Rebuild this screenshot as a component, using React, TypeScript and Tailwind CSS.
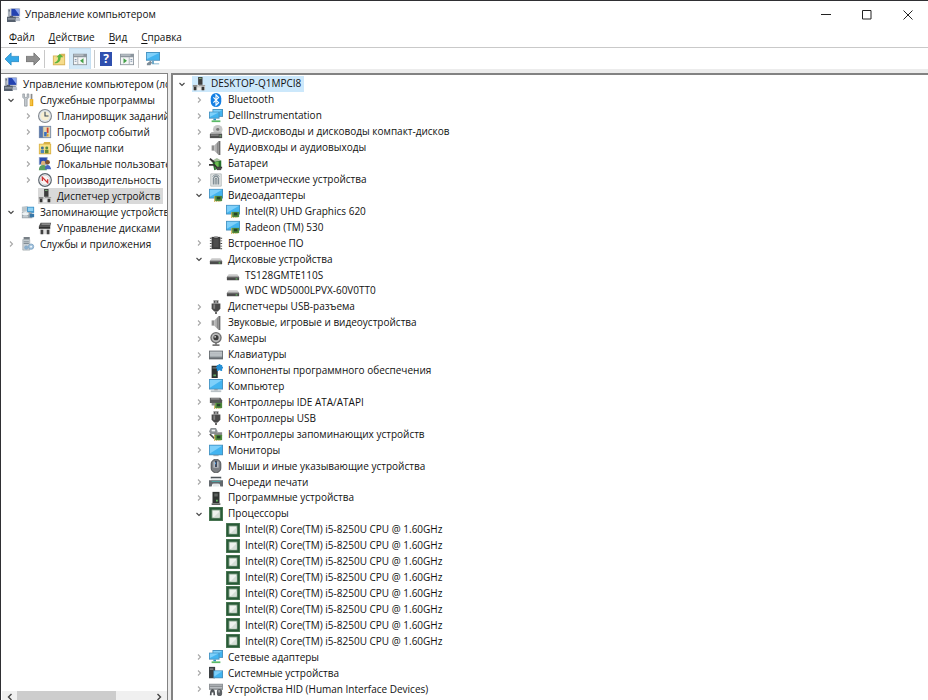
import React from 'react';
import clsx from 'clsx';

interface TreeNode {
  label: string;
  icon: IconName;
  depth: number;
  state?: 'open' | 'closed';
  selected?: boolean;
}

const Monitor = ({ x = 1, y = 2, w = 14, h = 9 }: { x?: number; y?: number; w?: number; h?: number }) => (
  <g>
    <rect x={x} y={y} width={w} height={h} fill="#4a90bd" />
    <rect x={x + 1} y={y + 1} width={w - 2} height={h - 2} fill="#43b4f0" />
    <path d={`M${x + 1} ${y + 1}h${w - 2}L${x + 1} ${y + h - 2}z`} fill="#7fd0fa" />
  </g>
);

const Chip = () => (
  <g>
    <path d="M7 9h8v6H7z" fill="#4f8a3c" />
    <path d="M9 10h4v3H9z" fill="#27442a" />
    <path d="M6 9h1v7H6zM8 15h1v1H8zM10 15h1v1h-1zM12 15h1v1h-1z" fill="#c6a53b" />
  </g>
);

const Plug = () => (
  <g>
    <path d="M5 0h6v4H5z" fill="#a0a0a0" />
    <path d="M6 1h1v2H6zM9 1h1v2H9z" fill="#333" />
    <path d="M3 4h10v6l-3 3H6l-3-3z" fill="#484848" />
    <path d="M5 5h2v5H5z" fill="#808080" />
    <path d="M7 13h2v3H7z" fill="#555" />
  </g>
);

const Speaker = () => (
  <g>
    <path d="M3 5h3v6H3z" fill="#8f8f8f" />
    <path d="M6 5l5-5v16l-5-5z" fill="#b3b3b3" />
    <path d="M11 0h2v16h-2z" fill="#6b6b6b" />
    <path d="M9 3l2-3v16l-2-3z" fill="#8a8a8a" />
  </g>
);

const Drive = () => (
  <g>
    <path d="M3 7h10l2 3H1z" fill="#c9c9c9" />
    <path d="M1 10h14v4H1z" fill="#4b4b4b" />
    <path d="M1 10h14v1H1z" fill="#777" />
    <path d="M11 12h2v1h-2z" fill="#6fe06b" />
  </g>
);

const icons = {
  management: (
    <g>
      <path d="M4 0h11v10H4z" fill="#c8cdd6" />
      <path d="M5 1h9v8H5z" fill="#2342b0" />
      <path d="M9 1h5v7z" fill="#8aa5ee" />
      <path d="M1 1h3v9H1z" fill="#a9b0bb" />
      <path d="M2 2h1v2H2z" fill="#4a5260" />
      <path d="M6 10h7l2 2H6z" fill="#8a93a3" />
      <path d="M0 10h10v6H0z" fill="#56606e" />
      <path d="M3 9h4v1H3z" fill="#333b48" />
      <path d="M1 12h8v1H1z" fill="#bfc5cc" />
      <path d="M10 12h5v3h-5z" fill="#b9c0cc" />
    </g>
  ),
  device: (
    <g>
      <path d="M7 0h5v9H7z" fill="#3d3d3d" />
      <path d="M8 1h3v1H8z" fill="#8cc98c" />
      <path d="M1 9h14v6H1z" fill="#d0d0d0" />
      <path d="M1 9h5v2H1zM8 9h7v1H8z" fill="#8a8a8a" />
      <path d="M2 11h3v4H2zM11 11h3v4h-3z" fill="#353535" />
      <path d="M6 12h4v3H6z" fill="#efefef" />
    </g>
  ),
  tools: (
    <g>
      <path d="M2 1v4l2 2v8h3V7l2-2V1H7v4H4V1z" fill="#c3c9ce" stroke="#747b82" strokeWidth=".6" />
      <path d="M11 1h2v6h-2z" fill="#8b8b8b" />
      <path d="M10 7h4v8h-4z" fill="#e8a818" />
      <path d="M11 8h1v6h-1z" fill="#ffdc72" />
    </g>
  ),
  clock: (
    <g>
      <circle cx="8" cy="8" r="8" fill="#80868c" />
      <circle cx="8" cy="8" r="6.8" fill="#dfe6eb" />
      <circle cx="8" cy="8" r="5.2" fill="#f6eed2" />
      <path d="M8 3v5h4" fill="none" stroke="#345" strokeWidth="1.2" />
    </g>
  ),
  events: (
    <g>
      <path d="M1 1h14v14H1z" fill="#7389ad" />
      <path d="M2 2h3v12H2z" fill="#5677b0" />
      <path d="M6 2h8v12H6z" fill="#e5d8ae" />
      <path d="M10 3h2v6h-2z" fill="#d33b2c" />
      <path d="M7 8h3v5H7z" fill="#3b70c0" />
      <path d="M10 10h2v3h-2z" fill="#dba128" />
    </g>
  ),
  folders: (
    <g>
      <path d="M1 3h5l1-2h7v2h1v12H1z" fill="#d9b146" />
      <path d="M2 4h12v10H2z" fill="#f8e186" />
      <circle cx="5" cy="8" r="1.7" fill="#3e6e9c" />
      <circle cx="10" cy="8" r="1.7" fill="#5a8c3e" />
      <path d="M3 10h4v4H3z" fill="#4c84bf" />
      <path d="M8 10h4v4H8z" fill="#668b35" />
    </g>
  ),
  users: (
    <g>
      <path d="M1 0h10v9H1z" fill="#8fa3cc" />
      <path d="M2 1h8v7H2z" fill="#2d4db0" />
      <circle cx="6" cy="7" r="2.6" fill="#dfb17a" />
      <path d="M1 15q0-6 5-6t4 6z" fill="#5a9f62" />
      <circle cx="11" cy="6" r="2.6" fill="#7e5330" />
      <path d="M8 14q0-5 3-5t4 5z" fill="#4767c0" />
    </g>
  ),
  performance: (
    <g>
      <circle cx="8" cy="8" r="7.2" fill="#fff" stroke="#5c656e" strokeWidth="1.4" />
      <circle cx="8" cy="8" r="5.4" fill="#fbf3f3" stroke="#c0c8ce" strokeWidth=".8" />
      <path d="M5 9V5l6 6V7" fill="none" stroke="#cf3434" strokeWidth="1.5" />
    </g>
  ),
  storage: (
    <g>
      <path d="M1 2l6-1 2 2v4l-7 1-1-1z" fill="#bcc6cb" />
      <path d="M7 2h8v7H7z" fill="#3f93c9" />
      <path d="M8 3h6v4H8z" fill="#8fd1f3" />
      <path d="M1 8h10l2 2v5H1z" fill="#9aa5ac" />
      <ellipse cx="5" cy="10" rx="3.8" ry="2" fill="#edf2f4" />
      <path d="M10 10h5v4h-5z" fill="#3777a8" />
      <path d="M2 13h6v1H2z" fill="#dce3e6" />
    </g>
  ),
  diskManagement: (
    <g>
      <path d="M3 2h12l-1 4H1z" fill="#505050" />
      <path d="M4 3h10v1H4z" fill="#c2c2c2" />
      <path d="M1 6h13v3H1z" fill="#2f2f2f" />
      <path d="M2 9h12v6H2z" fill="#dedede" />
      <path d="M3 10h3v5H3zM10 10h3v5h-3z" fill="#424242" />
    </g>
  ),
  services: (
    <g>
      <path d="M3 0h7v3H3z" fill="#777f86" />
      <path d="M2 3h8v12H2z" fill="#c9d0d5" stroke="#8b959c" strokeWidth=".6" />
      <path d="M3 5h6v1H3zM3 7h6v1H3z" fill="#6b7780" />
      <circle cx="11.5" cy="11" r="3" fill="#a4c4df" stroke="#7fa3c2" />
      <circle cx="11.5" cy="11" r="1" fill="#fff" />
      <circle cx="6" cy="12" r="2" fill="#8ab0d0" stroke="#7fa3c2" strokeWidth=".6" />
    </g>
  ),
  bluetooth: (
    <g>
      <rect x="2" y="0" width="12" height="16" rx="6" fill="#1580e4" />
      <path d="M5 5l6 6-3 3V2l3 3-6 6" fill="none" stroke="#fff" strokeWidth="1.3" />
    </g>
  ),
  network: (
    <g>
      <Monitor x={4} y={0} w={12} h={9} />
      <Monitor x={0} y={3} w={12} h={8} />
      <path d="M5 11h3v2H5z" fill="#2d90c7" />
      <path d="M3 13h10v2H3z" fill="#5cba66" />
    </g>
  ),
  dvd: (
    <g>
      <ellipse cx="10" cy="5" rx="5.5" ry="5" fill="#c6c6c6" />
      <ellipse cx="10" cy="5" rx="1.8" ry="1.5" fill="#777" />
      <path d="M3 8h11l1 2H1z" fill="#b5b5b5" />
      <path d="M1 10h14v5H1z" fill="#505050" />
      <path d="M2 11h9v1H2z" fill="#aaa" />
      <path d="M12 12h2v1h-2z" fill="#89d687" />
    </g>
  ),
  speaker: <Speaker />,
  battery: (
    <g>
      <path d="M2 5l7-4 5 3-7 4z" fill="#a9bfa0" />
      <path d="M4 6l10-2v8l-8 3z" fill="#26712c" />
      <path d="M7 6l4-1v7l-4 1z" fill="#6dbd52" />
      <path d="M1 2l5 4M0 9h6l3 3h6" fill="none" stroke="#343434" strokeWidth="2" />
      <path d="M9 12h5v3H9z" fill="#484848" />
    </g>
  ),
  fingerprint: (
    <g>
      <path d="M2 1h12v14H2z" fill="#e3e6e6" stroke="#b4baba" />
      <path d="M5 13V6q3-5 6 0v7M7 13V7q1-2 2 0v6" fill="none" stroke="#7c8a90" strokeWidth="1.3" />
      <path d="M4 4q4-4 8 0" fill="none" stroke="#7c8a90" />
    </g>
  ),
  display: (
    <g>
      <Monitor x={0} y={1} w={16} h={11} />
      <Chip />
    </g>
  ),
  firmware: (
    <g>
      <path d="M3 1h10v14H3z" fill="#3c3c3c" />
      <path d="M5 3h6v10H5z" fill="#4d4d4d" />
      <path d="M1 2h2v1H1zM1 5h2v1H1zM1 8h2v1H1zM1 11h2v1H1zM1 14h2v1H1zM13 2h2v1h-2zM13 5h2v1h-2zM13 8h2v1h-2zM13 11h2v1h-2zM13 14h2v1h-2z" fill="#444" />
      <path d="M6 0h4v2H6z" fill="#a6a6a6" />
    </g>
  ),
  drive: <Drive />,
  plug: <Plug />,
  camera: (
    <g>
      <circle cx="8" cy="6.5" r="6.5" fill="#6e6e6e" />
      <circle cx="8" cy="6.5" r="5" fill="#bcbcbc" />
      <circle cx="8" cy="6.5" r="3" fill="#3c3c3c" />
      <circle cx="7" cy="5.5" r="1" fill="#ddd" />
      <path d="M7 12h2v2h3v2H4v-2h3z" fill="#777" />
    </g>
  ),
  keyboard: (
    <g>
      <path d="M0 3h16v10H0z" fill="#666b70" />
      <path d="M1 4h14v6H1z" fill="#c3c8cc" />
      <path d="M1 6h14M1 8h14" stroke="#a3a9ae" strokeWidth=".6" />
      <path d="M1 10h14v1H1z" fill="#8b9095" />
    </g>
  ),
  component: (
    <g>
      <path d="M3 2h7v14H3z" fill="#2d3230" />
      <path d="M4 4h4v1H4z" fill="#999" />
      <path d="M5 12h3v2H5z" fill="#65a865" />
      <path d="M9 1h2V0h2v1h2v2h1v2h-1v3h-2V7h-2v1H9V5H8V3h1z" fill="#2790d5" />
    </g>
  ),
  computer: (
    <g>
      <Monitor x={0} y={0} w={16} h={12} />
      <path d="M6 12h4v1H6z" fill="#777" />
      <path d="M2 13h12v2H2z" fill="#b9c1c6" />
    </g>
  ),
  ide: (
    <g>
      <path d="M1 3h12l2 3v3H1z" fill="#555" />
      <path d="M2 4h10v1H2z" fill="#b7b7b7" />
      <Chip />
      <path d="M3 9h4v3H3z" fill="#898989" />
    </g>
  ),
  storageController: (
    <g>
      <path d="M2 1h6l2 4-3 3H2L0 5z" fill="#8d9296" />
      <path d="M3 3h4v2H3z" fill="#eef1f2" />
      <path d="M1 8l5 5" stroke="#4b4b4b" strokeWidth="2" />
      <path d="M6 6h9v4H6z" fill="#8a8a8a" />
      <Chip />
    </g>
  ),
  monitor: (
    <g>
      <Monitor x={0} y={2} w={16} h={12} />
      <path d="M5 14h6v1H5z" fill="#8b9aa3" />
    </g>
  ),
  mouse: (
    <g>
      <rect x="2.5" y=".5" width="11" height="15" rx="5" fill="#7d8084" stroke="#44474a" />
      <path d="M5 3h6v7H5z" fill="#b4b9be" />
      <path d="M7 2h2v7H7z" fill="#303c52" />
      <path d="M7 4h1v2H7z" fill="#55a9ee" />
    </g>
  ),
  printer: (
    <g>
      <path d="M2 2h12v2H2z" fill="#4c5358" />
      <path d="M3 4h10l1 2H2z" fill="#e9eef0" />
      <path d="M0 6h16v7h-3l-1-3H4l-1 3H0z" fill="#62686d" />
      <path d="M3 7h10v1H3z" fill="#48a7a7" />
      <path d="M5 10h6l1 3H4z" fill="#e2e7ea" />
    </g>
  ),
  software: (
    <g>
      <path d="M4 1h8v13H4z" fill="#303432" />
      <path d="M6 3h4v1H6zM6 5h4v1H6z" fill="#8d9390" />
      <path d="M8 10h2v2H8z" fill="#62c163" />
      <path d="M3 14h10v2H3z" fill="#606462" />
    </g>
  ),
  cpu: (
    <g>
      <path d="M0 0h16v16H0z" fill="#4c7856" />
      <path d="M1 1h14v14H1z" fill="#285a37" />
      <path d="M3 3h10v10H3z" fill="#86a58c" />
      <path d="M4 4h8v8H4z" fill="#eef2ee" />
      <path d="M12 5v7H5z" fill="#d5ded7" />
    </g>
  ),
  system: (
    <g>
      <path d="M0 1h7v13H0z" fill="#3a3f43" />
      <path d="M1 3h4v1H1z" fill="#bbb" />
      <Monitor x={5} y={5} w={11} h={9} />
    </g>
  ),
  hid: (
    <g>
      <path d="M0 2h16v7H0z" fill="#8c9094" />
      <path d="M1 3h14v1H1zM1 6h14v1H1z" fill="#c8cccf" />
      <path d="M1 15q0-7 3-7t3 7H5v-3H3v3z" fill="#505458" />
      <rect x="9" y="8" width="6" height="8" rx="3" fill="#5d6165" />
      <path d="M11 9h1v3h-1z" fill="#e0e0e0" />
    </g>
  ),
  back: <path d="M0 8l7-7v4h9v6H7v4z" fill="#35a8e8" stroke="#2385bf" strokeWidth=".8" />,
  forward: <path d="M16 8L9 1v4H0v6h9v4z" fill="#8f8f8f" stroke="#666" strokeWidth=".8" />,
  upFolder: (
    <g>
      <path d="M1 4h8l1-2h5v13H1z" fill="#d8b45a" />
      <path d="M2 5h12v9H2z" fill="#f6dc8c" />
      <path d="M3 12q4-1 4-6H5l4-4 4 4h-3q0 7-7 7z" fill="#5cb53e" />
    </g>
  ),
  panel: (
    <g>
      <path d="M0 2h16v13H0z" fill="#8d969e" />
      <path d="M1 6h14v8H1z" fill="#f4f5f6" />
      <path d="M1 3h11v1H1z" fill="#d9dee3" />
      <path d="M5 6h1v8H5z" fill="#a4acb3" />
      <path d="M12 7v6l-4-3z" fill="#43a047" />
      <path d="M2 8h2v1H2zM2 10h2v1H2z" fill="#8296b0" />
    </g>
  ),
  actionPanel: (
    <g>
      <path d="M0 2h16v13H0z" fill="#8d969e" />
      <path d="M1 6h14v8H1z" fill="#f4f5f6" />
      <path d="M1 3h11v1H1z" fill="#d9dee3" />
      <path d="M10 6h1v8h-1z" fill="#a4acb3" />
      <path d="M4 7v6l4-3z" fill="#43a047" />
      <path d="M12 8h2v1h-2zM12 10h2v1h-2z" fill="#8296b0" />
    </g>
  ),
  scan: (
    <g>
      <Monitor x={0} y={0} w={16} h={10} />
      <path d="M1 13l4-3 2 2-2 3H1z" fill="#7d8c97" />
      <path d="M7 10h2v3h6v1H7z" fill="#5e9fc2" />
    </g>
  ),
};

type IconName = keyof typeof icons;

const Icon = ({ name, className = 'size-3.5' }: { name: IconName; className?: string }) => (
  <svg viewBox="0 0 16 16" className={clsx('shrink-0', className)} aria-hidden="true">
    {icons[name]}
  </svg>
);

const consoleTree: TreeNode[] = [
  { label: 'Управление компьютером (локальным)', icon: 'management', depth: 0 },
  { label: 'Служебные программы', icon: 'tools', depth: 0, state: 'open' },
  { label: 'Планировщик заданий', icon: 'clock', depth: 1, state: 'closed' },
  { label: 'Просмотр событий', icon: 'events', depth: 1, state: 'closed' },
  { label: 'Общие папки', icon: 'folders', depth: 1, state: 'closed' },
  { label: 'Локальные пользователи', icon: 'users', depth: 1, state: 'closed' },
  { label: 'Производительность', icon: 'performance', depth: 1, state: 'closed' },
  { label: 'Диспетчер устройств', icon: 'device', depth: 1, selected: true },
  { label: 'Запоминающие устройства', icon: 'storage', depth: 0, state: 'open' },
  { label: 'Управление дисками', icon: 'diskManagement', depth: 1 },
  { label: 'Службы и приложения', icon: 'services', depth: 0, state: 'closed' },
];

const cores: TreeNode[] = Array.from({ length: 8 }, () => ({
  label: 'Intel(R) Core(TM) i5-8250U CPU @ 1.60GHz',
  icon: 'cpu',
  depth: 2,
}));

const deviceTree: TreeNode[] = [
  { label: 'DESKTOP-Q1MPCI8', icon: 'device', depth: 0, state: 'open', selected: true },
  { label: 'Bluetooth', icon: 'bluetooth', depth: 1, state: 'closed' },
  { label: 'DellInstrumentation', icon: 'network', depth: 1, state: 'closed' },
  { label: 'DVD-дисководы и дисководы компакт-дисков', icon: 'dvd', depth: 1, state: 'closed' },
  { label: 'Аудиовходы и аудиовыходы', icon: 'speaker', depth: 1, state: 'closed' },
  { label: 'Батареи', icon: 'battery', depth: 1, state: 'closed' },
  { label: 'Биометрические устройства', icon: 'fingerprint', depth: 1, state: 'closed' },
  { label: 'Видеоадаптеры', icon: 'display', depth: 1, state: 'open' },
  { label: 'Intel(R) UHD Graphics 620', icon: 'display', depth: 2 },
  { label: 'Radeon (TM) 530', icon: 'display', depth: 2 },
  { label: 'Встроенное ПО', icon: 'firmware', depth: 1, state: 'closed' },
  { label: 'Дисковые устройства', icon: 'drive', depth: 1, state: 'open' },
  { label: 'TS128GMTE110S', icon: 'drive', depth: 2 },
  { label: 'WDC WD5000LPVX-60V0TT0', icon: 'drive', depth: 2 },
  { label: 'Диспетчеры USB-разъема', icon: 'plug', depth: 1, state: 'closed' },
  { label: 'Звуковые, игровые и видеоустройства', icon: 'speaker', depth: 1, state: 'closed' },
  { label: 'Камеры', icon: 'camera', depth: 1, state: 'closed' },
  { label: 'Клавиатуры', icon: 'keyboard', depth: 1, state: 'closed' },
  { label: 'Компоненты программного обеспечения', icon: 'component', depth: 1, state: 'closed' },
  { label: 'Компьютер', icon: 'computer', depth: 1, state: 'closed' },
  { label: 'Контроллеры IDE ATA/ATAPI', icon: 'ide', depth: 1, state: 'closed' },
  { label: 'Контроллеры USB', icon: 'plug', depth: 1, state: 'closed' },
  { label: 'Контроллеры запоминающих устройств', icon: 'storageController', depth: 1, state: 'closed' },
  { label: 'Мониторы', icon: 'monitor', depth: 1, state: 'closed' },
  { label: 'Мыши и иные указывающие устройства', icon: 'mouse', depth: 1, state: 'closed' },
  { label: 'Очереди печати', icon: 'printer', depth: 1, state: 'closed' },
  { label: 'Программные устройства', icon: 'software', depth: 1, state: 'closed' },
  { label: 'Процессоры', icon: 'cpu', depth: 1, state: 'open' },
  ...cores,
  { label: 'Сетевые адаптеры', icon: 'network', depth: 1, state: 'closed' },
  { label: 'Системные устройства', icon: 'system', depth: 1, state: 'closed' },
  { label: 'Устройства HID (Human Interface Devices)', icon: 'hid', depth: 1, state: 'closed' },
];

const indents = ['', 'pl-[17px]', 'pl-[34px]'];

const Expander = ({ state, label }: { state?: 'open' | 'closed'; label: string }) => {
  if (!state) return <span className="mr-[3px] w-3.5 shrink-0" />;
  return (
    <button aria-label={label} className="mr-[3px] flex h-4 w-3.5 shrink-0 items-center justify-center">
      <svg viewBox="0 0 8 8" className="size-2" fill="none" aria-hidden="true">
        {state === 'open' ? (
          <path d="M1.500 3L4 5.500L6.500 3" stroke="#454545" strokeWidth="1.1" />
        ) : (
          <path d="M3 1.500L5.500 4L3 6.500" stroke="#a8a8a8" strokeWidth="1.1" />
        )}
      </svg>
    </button>
  );
};

const Tree = ({ nodes, label, selectedClass }: { nodes: TreeNode[]; label: string; selectedClass: string }) => (
  <ul role="tree" aria-label={label} className="flex min-h-0 min-w-0 flex-1 flex-col overflow-hidden">
    {nodes.map((node, i) => (
      <li
        key={i}
        role="treeitem"
        aria-selected={!!node.selected}
        aria-expanded={node.state ? node.state === 'open' : undefined}
        className={clsx('flex max-h-4 min-h-0 flex-1 items-center whitespace-nowrap', indents[node.depth])}
      >
        {(i > 0 || node.state) && <Expander state={node.state} label={node.label} />}
        <span className={clsx('flex h-4 items-center gap-[5px] pr-[3px]', node.selected && selectedClass)}>
          <Icon name={node.icon} />
          <span>{node.label}</span>
        </span>
      </li>
    ))}
  </ul>
);

const menu = ['Файл', 'Действие', 'Вид', 'Справка'];

const ToolButton = ({ name, label, active }: { name: IconName; label: string; active?: boolean }) => (
  <button
    aria-label={label}
    className={clsx('flex h-5 w-5 items-center justify-center', active && 'bg-[#d3e9f8] outline outline-[#c5e0f3]')}
  >
    <Icon name={name} />
  </button>
);

const Separator = () => <span className="h-[18px] w-px bg-[#c8c8c8]" />;

const App: React.FC = () => {
  return (
    <div className="flex h-screen flex-col overflow-hidden border-t border-l border-[#2f2f33] bg-white font-['Open_Sans','Noto_Sans',sans-serif] text-[10px] text-[#111]">
      <header className="flex h-[27px] shrink-0 items-center justify-between pl-1.5">
        <div className="flex items-center gap-1">
          <Icon name="management" />
          <h1>Управление компьютером</h1>
        </div>
        <div className="flex">
          <button aria-label="Свернуть" className="flex h-6 w-[41px] items-center justify-center">
            <svg viewBox="0 0 10 10" className="size-2.5" stroke="#222" aria-hidden="true">
              <path d="M0 4.500h10" />
            </svg>
          </button>
          <button aria-label="Развернуть" className="flex h-6 w-[41px] items-center justify-center">
            <svg viewBox="0 0 10 10" className="size-2.5" stroke="#222" fill="none" aria-hidden="true">
              <path d="M.5.5h8.500v8.500H.5z" />
            </svg>
          </button>
          <button aria-label="Закрыть" className="flex h-6 w-[41px] items-center justify-center">
            <svg viewBox="0 0 10 10" className="size-2.5" stroke="#222" aria-hidden="true">
              <path d="M.5.5l9 9M9.500.5l-9 9" />
            </svg>
          </button>
        </div>
      </header>

      <nav className="flex h-[19px] shrink-0 items-center gap-3.5 pl-2">
        {menu.map((item) => (
          <button key={item}>
            <span className="underline underline-offset-2">{item[0]}</span>
            {item.slice(1)}
          </button>
        ))}
      </nav>

      <div className="flex h-[22px] shrink-0 items-center gap-px border-t border-[#c9c9c9] pl-px">
        <ToolButton name="back" label="Назад" />
        <ToolButton name="forward" label="Вперед" />
        <Separator />
        <span className="w-0.5" />
        <ToolButton name="upFolder" label="Вверх" />
        <ToolButton name="panel" label="Дерево консоли" active />
        <span className="w-0.5" />
        <Separator />
        <button aria-label="Справка" className="flex h-5 w-5 items-center justify-center">
          <span className="flex h-3.5 w-3 items-center justify-center bg-[#2f4fae] text-xs font-bold text-white">?</span>
        </button>
        <ToolButton name="actionPanel" label="Панель действий" />
        <Separator />
        <span className="w-0.5" />
        <ToolButton name="scan" label="Обновить конфигурацию оборудования" />
      </div>

      <main className="flex min-h-0 flex-1 border-t-4 border-[#ececec] bg-[#ececec]">
        <section className="flex w-[167px] shrink-0 flex-col overflow-hidden border-t border-r border-[#828282] bg-white pt-0.5">
          <div className="flex min-h-0 flex-1 pl-[3px]">
            <Tree nodes={consoleTree} label="Дерево консоли" selectedClass="bg-[#d9d9d9]" />
          </div>
          <div className="ml-px flex h-[9px] shrink-0 items-start overflow-hidden bg-[#f0f0f0]">
            <button aria-label="Влево" className="flex h-3 w-[15px] items-center justify-center">
              <svg viewBox="0 0 8 8" className="size-2" fill="none" stroke="#444" strokeWidth="1.4" aria-hidden="true">
                <path d="M5.500 1L2.500 4L5.500 7" />
              </svg>
            </button>
            <span className="h-3 w-[99px] bg-[#cdcdcd]" />
            <span className="flex-1" />
            <button aria-label="Вправо" className="flex h-3 w-[17px] items-center justify-center">
              <svg viewBox="0 0 8 8" className="size-2" fill="none" stroke="#444" strokeWidth="1.4" aria-hidden="true">
                <path d="M2.500 1L5.500 4L2.500 7" />
              </svg>
            </button>
          </div>
        </section>
        <section className="ml-[3px] flex min-w-0 flex-1 overflow-hidden border-t-2 border-l-2 border-[#828282] bg-white pt-px pb-[3px] pl-0.5">
          <Tree nodes={deviceTree} label="Устройства" selectedClass="bg-[#cce8fb]" />
        </section>
      </main>
    </div>
  );
};

export default App;
